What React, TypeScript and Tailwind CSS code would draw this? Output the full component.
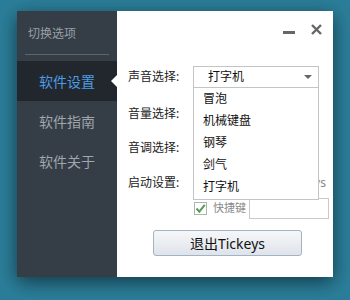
import * as React from "react";

const sound = ["冒泡", "机械键盘", "钢琴", "剑气", "打字机"];

function Sidebar() {
  const items = ["软件设置", "软件指南", "软件关于"];
  return (
    <div className="w-[100px] h-full bg-[#353d46] flex flex-col">
      <div className="h-[43px] pl-[11px] pt-[2px] flex items-center text-[12px] text-[#98a0a8]">
        切换选项
      </div>
      <div className="mx-[8px] h-px bg-[#5c646c]" />
      <div className="h-[6px]" />
      {items.map((item, i) => (
        <div
          key={item}
          className={`relative h-[40px] pl-[22px] flex items-center text-[14px] ${
            i === 0 ? "bg-[#22272d] text-[#4a9de6]" : "text-[#a0a6ac]"
          }`}
        >
          {item}
          {i === 0 && (
            <span className="absolute right-0 top-[14px] w-0 h-0 border-y-[6px] border-y-transparent border-r-[6px] border-r-white" />
          )}
        </div>
      ))}
    </div>
  );
}

function Row({ label, className, children }: { label: string; className?: string; children?: React.ReactNode }) {
  return (
    <div className={`h-[22px] flex items-center ${className || ""}`}>
      <div className="w-[76px] pl-[11px] text-[12px] text-[#222]">{label}</div>
      {children}
    </div>
  );
}

export default function App() {
  return (
    <div
      className="w-[350px] h-[300px] bg-[#2b7e9a] pt-[11px] pl-[17px] overflow-hidden"
      style={{ fontFamily: '"Noto Sans", "Noto Sans CJK SC", sans-serif' }}
    >
      <div className="w-[316px] h-[266px] flex shadow-[0_5px_18px_rgba(0,0,0,0.55)]">
        <Sidebar />
        <div className="flex-1 bg-white relative flex flex-col">
          {/* title bar */}
          <div className="h-[55px] flex justify-end items-start pt-[13px] pr-[11px] gap-[16px]">
            <div className="w-[12px] h-[10px] flex items-end">
              <div className="w-[12px] h-[3px] bg-[#666]" />
            </div>
            <svg width="11" height="11" viewBox="0 0 11 11">
              <path d="M1 1L10 10M10 1L1 10" stroke="#666" strokeWidth="2.4" />
            </svg>
          </div>

          <Row label="声音选择:">
            <div className="w-[126px] h-[22px] border border-[#c4c4c4] flex items-center pl-[14px] pr-[6px] text-[12px] text-[#111]">
              <span className="flex-1">打字机</span>
              <span className="w-0 h-0 border-x-[4px] border-x-transparent border-t-[4px] border-t-[#666]" />
            </div>
          </Row>
          <Row label="音量选择:" className="mt-[15px]" />
          <Row label="音调选择:" className="mt-[12px]" />
          <Row label="启动设置:" className="mt-[13px]">
            <div className="flex-1 flex justify-end pr-[7px] text-[12px] text-[#888]">开机启动Tickeys</div>
          </Row>

          {/* hotkey row */}
          <div className="mt-[4px] h-[21px] flex items-center">
            <div className="w-[77px]" />
            <div className="w-[13px] h-[13px] border border-[#a9b8a9] bg-white flex items-center justify-center">
              <svg width="11" height="11" viewBox="0 0 11 11">
                <path d="M1.5 5.5L4.3 8.6L9.8 1.8" stroke="#5a9a5a" strokeWidth="2" fill="none" />
              </svg>
            </div>
            <span className="ml-[6px] w-[36px] text-[11px] text-[#8a8a8a]">快捷键</span>
            <div className="w-[80px] h-[21px] border border-[#c8c8c8] bg-white" />
          </div>

          {/* exit button */}
          <div className="mt-[11px] pl-[36px]">
            <button className="w-[149px] h-[26px] rounded-[3px] border border-[#a3b3c6] bg-gradient-to-b from-[#f6f7f9] to-[#dfe3ea] text-[14px] text-[#111] flex items-center justify-center">
              退出Tickeys
            </button>
          </div>

          {/* open dropdown list */}
          <div className="absolute left-[76px] top-[77px] w-[126px] h-[112px] bg-white border border-t-0 border-[#c4c4c4]">
            {sound.map((s) => (
              <div key={s} className="h-[22px] pl-[9px] flex items-center text-[12px] text-[#111]">
                {s}
              </div>
            ))}
          </div>
        </div>
      </div>
    </div>
  );
}
